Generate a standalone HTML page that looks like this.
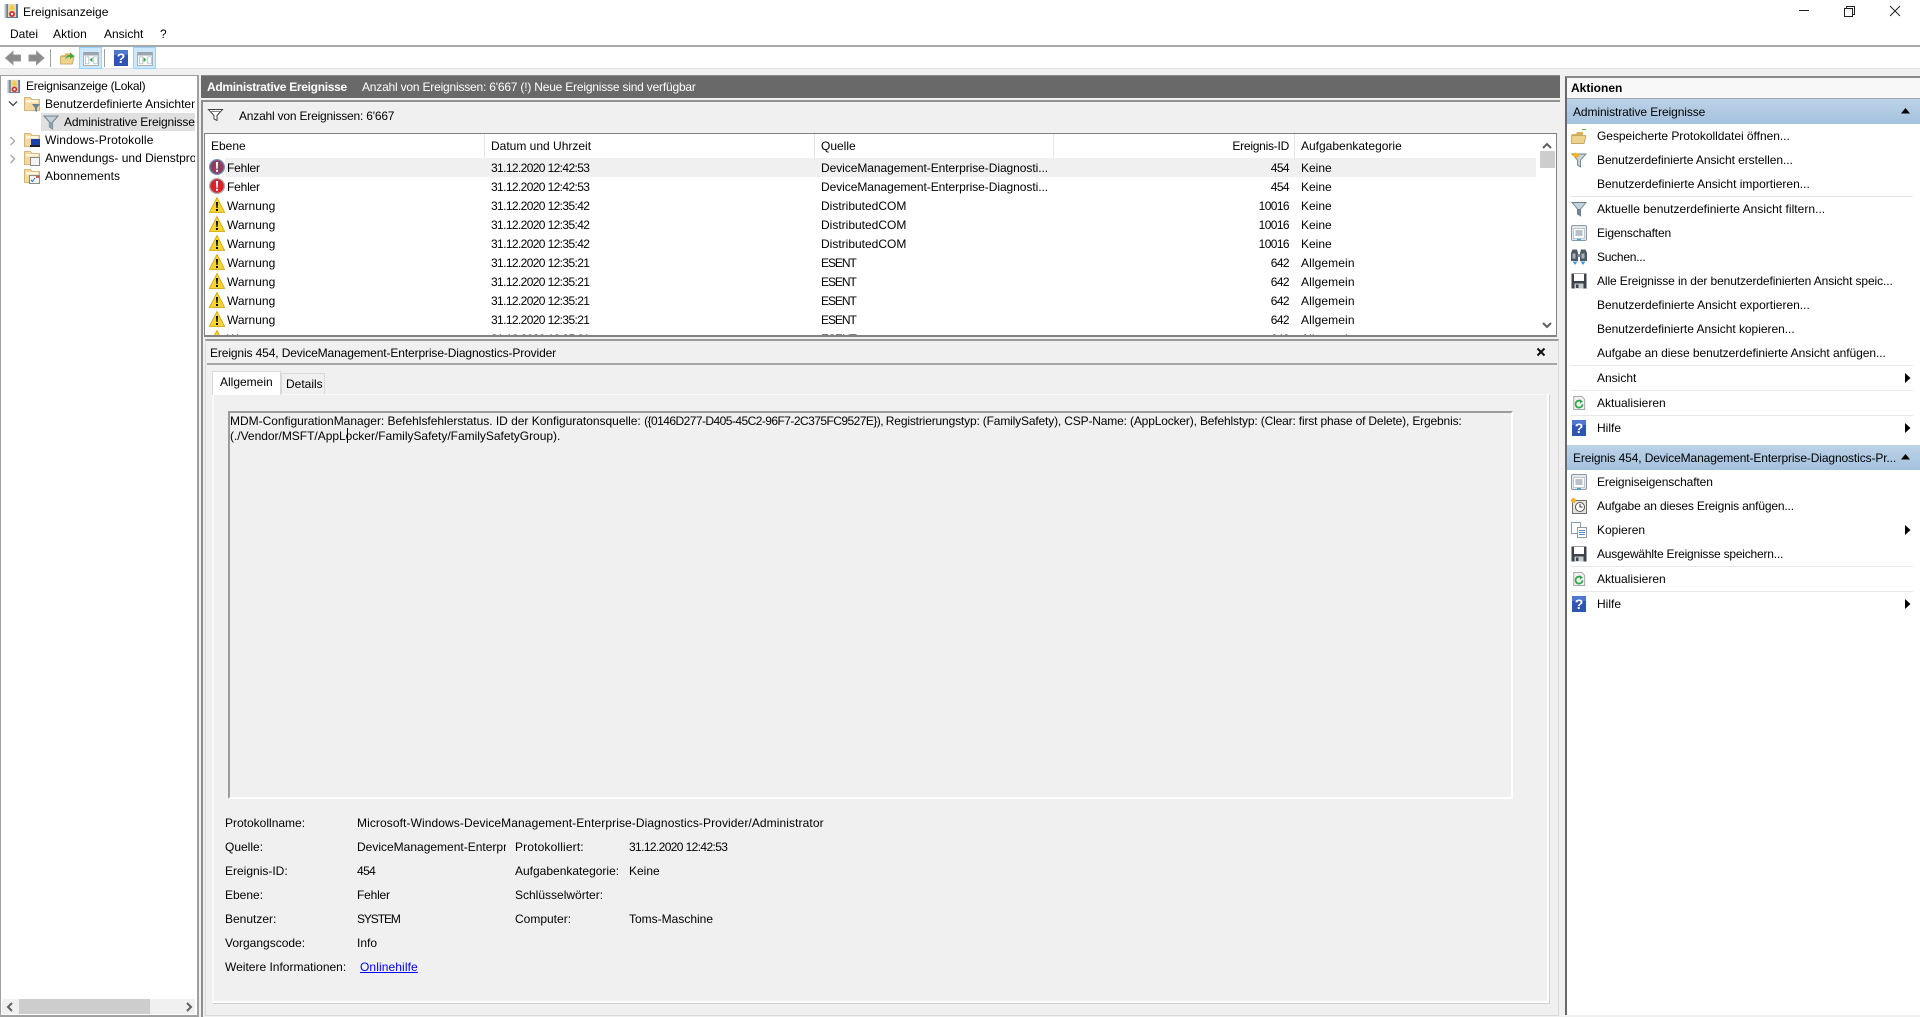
<!DOCTYPE html>
<html lang="de"><head><meta charset="utf-8"><title>Ereignisanzeige</title>
<style>
html,body{margin:0;padding:0;width:1920px;height:1017px;overflow:hidden;background:#f0f0f0}
body{position:relative;font:12px/16px "Liberation Sans",sans-serif;color:#000}
.a{position:absolute}
.t{position:absolute;white-space:nowrap;line-height:16px}
svg{position:absolute;overflow:visible}
.r{text-align:right}
.s{position:absolute;left:1571px;width:342px;height:1px;background:#e8e8e8}
.d{letter-spacing:-.62px}
.e{letter-spacing:-1.05px}
.n{letter-spacing:-.6px}
</style></head><body>
<svg width="0" height="0" style="position:absolute">
<defs>
<symbol id="err" viewBox="0 0 16 16"><circle cx="8" cy="8" r="8" fill="#a8a8a8"/><circle cx="8" cy="8" r="6.700" fill="#d8232a"/><path d="M6.900 3h2.200L8.700 9.800H7.300z" fill="#fff"/><rect x="7" y="10.800" width="2" height="2" fill="#fff"/></symbol>
<symbol id="err2" viewBox="0 0 16 16"><circle cx="8" cy="8" r="8" fill="#6f93c0"/><circle cx="8" cy="8" r="6.700" fill="#8e3f5e"/><path d="M6.900 3h2.200L8.700 9.800H7.300z" fill="#fff"/><rect x="7" y="10.800" width="2" height="2" fill="#fff"/></symbol>
<symbol id="warn" viewBox="0 0 16 16"><path d="M8 .5L15.700 15.500H.3z" fill="#f7d433" stroke="#c9a100" stroke-width=".8"/><path d="M7 5h2l-.4 6H7.400z" fill="#000"/><rect x="7" y="12" width="2" height="2" fill="#000"/></symbol>
<symbol id="fun" viewBox="0 0 16 16"><path d="M1 1.500h14L9.600 8v7L6.400 13V8z" fill="#c4d2dd" stroke="#6c7f8d" stroke-width=".9"/><path d="M6.400 8v5l3.200 2V8z" fill="#6e8494"/></symbol>
<symbol id="funo" viewBox="0 0 16 16"><path d="M1 2h14L9.600 8v7L6.400 13V8z" fill="#c9d3da" stroke="#6c7f8d" stroke-width=".9"/><path d="M1.500 2h7L6.400 6z" fill="#f59b12"/><circle cx="4.500" cy="3" r="2.400" fill="#ffb71a"/></symbol>
<symbol id="prop" viewBox="0 0 16 16"><rect x=".5" y=".5" width="15" height="15" rx="1.500" fill="#e5e8ec" stroke="#8b99a6"/><rect x="2.500" y="3.500" width="11" height="10" fill="#fff" stroke="#a9b4bf" stroke-width=".7"/><path d="M4.500 6h7M4.500 8h7M4.500 10h7" stroke="#6f7f8f"/><rect x="6" y="14" width="4" height="1.400" fill="#3aa3e0"/></symbol>
<symbol id="bino" viewBox="0 0 16 16"><path d="M0 4l1.500-3.500h4.500L7 4v8H0zM9 4l1-3.500h4.500L16 4v8H9z" fill="#4d5964"/><path d="M1.500 4.500h3v5h-3zM10.500 4.500h3v5h-3z" fill="#a9b3bd"/><rect x="6.500" y="5" width="3" height="3" fill="#7d8894"/><path d="M1.500 12.500h5L4 16zM9.500 12.500h5L12 16z" fill="#3c9ae0"/></symbol>
<symbol id="save" viewBox="0 0 16 16"><path d="M.5.5h15v15H.5z" fill="#3d434a"/><rect x="3" y="1" width="10" height="7" fill="#fff"/><rect x="3.500" y="10.500" width="9" height="5" fill="#c7ccd1"/><rect x="5" y="11.500" width="2.500" height="3.500" fill="#3d434a"/></symbol>
<symbol id="ref" viewBox="0 0 16 16"><path d="M2 .5h9l3.500 3.500v11.500H2z" fill="#f2f2f2" stroke="#a0a0a0"/><path d="M12 9.500A4 4 0 1 1 10.500 6.200" fill="none" stroke="#2fa84a" stroke-width="2"/><path d="M9 3.500l3.500 3-3.500 2z" fill="#2fa84a"/></symbol>
<symbol id="help" viewBox="0 0 14 16"><rect width="14" height="16" fill="#2f55b4"/><rect x="0" y="0" width="14" height="5" fill="#4f76d1"/><text x="7" y="13.200" text-anchor="middle" font-family="Liberation Sans" font-weight="bold" font-size="14" fill="#fff">?</text></symbol>
<symbol id="fol" viewBox="0 0 16 16"><path d="M1 5h4l1-2h6v3H1z" fill="#d9b256"/><path d="M.5 14.500V6.500h11l3.500.2-2 7.800z" fill="#ecd28a" stroke="#b2924a" stroke-width=".7"/></symbol>
<symbol id="fol2" viewBox="0 0 16 16"><path d="M.5 14.500V1.500h6l1.500 2h7.500v11z" fill="#f3d9a0" stroke="#c8a765" stroke-width=".8"/><rect x="2" y="4" width="12" height="2.500" fill="#fff6de"/></symbol>
<symbol id="evt" viewBox="0 0 16 16"><rect x="3" y="1" width="12" height="14" fill="#5b7ba4"/><rect x="1.500" y="1" width="2" height="14" fill="#b6bec6"/><rect x="5" y="1" width="8" height="13" fill="#e7d9a8"/><path d="M9 1.500l3 5H6z" fill="#f6cb2c"/><circle cx="9" cy="11" r="3" fill="#d02c2c"/><circle cx="9" cy="11" r="1.200" fill="#fff"/></symbol>
<symbol id="win" viewBox="0 0 22 20"><rect x=".5" y=".5" width="21" height="19" fill="#fff" stroke="#8c8c8c"/><rect x="1" y="1" width="20" height="4" fill="#9aa6b2"/><path d="M3 7h5v10H3zM15 7h5v10h-5z" fill="#fff" stroke="#8fa0ad" stroke-width=".8"/></symbol>
</defs></svg>

<!-- title -->
<div class="a" style="left:0;top:0;width:1920px;height:45px;background:#fff"></div>
<svg style="left:3px;top:3px" width="16" height="16"><use href="#evt"/></svg>
<div class="t" style="left:23px;top:4px">Ereignisanzeige</div>
<div class="t" style="left:10px;top:26px">Datei</div>
<div class="t" style="left:53px;top:26px;letter-spacing:.1px">Aktion</div>
<div class="t" style="left:104px;top:26px">Ansicht</div>
<div class="t" style="left:160px;top:26px">?</div>
<svg style="left:1799px;top:5px" width="110" height="16"><path d="M0 5.500h10" stroke="#222"/><path d="M45.500 3.500h8v8h-8zM47.500 3.500v-2h8v8h-2" fill="none" stroke="#222"/><path d="M91 1l10 10M101 1L91 11" stroke="#222"/></svg>

<!-- toolbar -->
<div class="a" style="left:0;top:45px;width:1920px;height:2px;background:#a9a9a9"></div>
<div class="a" style="left:0;top:47px;width:1920px;height:21px;background:#fff"></div>
<div class="a" style="left:0;top:68px;width:1920px;height:1px;background:#e2e2e2"></div>
<svg style="left:5px;top:50px" width="42" height="16"><path d="M.5 8L8 1.500V5h7.500v6H8v3.500z" fill="#8a8a8a" stroke="#9a9a9a"/><path d="M40 8l-7.500-6.500V5H25v6h7.500v3.500z" fill="#8a8a8a" stroke="#9a9a9a" transform="translate(-1)"/></svg>
<div class="a" style="left:50px;top:49px;width:1px;height:18px;background:#a0a0a0"></div>
<svg style="left:60px;top:50px" width="15" height="16"><use href="#fol"/><path d="M5 10c1-4 3-5 5-5V2.500L14.500 6 10 9V7C8 7 6 8 5 10z" fill="#3faa46"/></svg>
<div class="a" style="left:79px;top:47px;width:21px;height:20px;background:#cce8ff;border:1px solid #99d1ff"></div>
<svg style="left:83px;top:52px" width="16" height="14" viewBox="0 0 22 20"><use href="#win"/><path d="M13 7.500v7L9 11z" fill="#2fa84a"/></svg>
<div class="a" style="left:104px;top:49px;width:1px;height:18px;background:#a0a0a0"></div>
<svg style="left:114px;top:50px" width="14" height="16"><use href="#help"/></svg>
<div class="a" style="left:133px;top:47px;width:21px;height:20px;background:#cce8ff;border:1px solid #99d1ff"></div>
<svg style="left:137px;top:52px" width="16" height="14" viewBox="0 0 22 20"><use href="#win"/><path d="M9 7.500v7l4-3.500z" fill="#2fa84a"/></svg>

<!-- left tree -->
<div class="a" style="left:0;top:75px;width:196px;height:939px;background:#fff;border:1px solid #a0a0a0;border-right:2px solid #a0a0a0;border-bottom:2px solid #a0a0a0"></div>
<div class="a" style="left:41px;top:113px;width:154px;height:18px;background:#e0e0e0"></div>
<svg style="left:6px;top:79px" width="15" height="15" viewBox="0 0 16 16"><use href="#evt"/></svg>
<div class="t" style="left:26px;top:78px;letter-spacing:-.26px">Ereignisanzeige (Lokal)</div>
<svg style="left:8px;top:100px" width="10" height="8"><path d="M1 1.500l4 4 4-4" fill="none" stroke="#444" stroke-width="1.300"/></svg>
<svg style="left:24px;top:96px" width="16" height="16"><use href="#fol2"/><path d="M8 8h8l-3 4v4l-2-1v-3z" fill="#6e8494"/></svg>
<div class="a" style="left:45px;top:96px;width:150px;height:16px;overflow:hidden"><div class="t" style="left:0;top:0">Benutzerdefinierte Ansichten</div></div>
<svg style="left:43px;top:114px" width="16" height="16"><path d="M1 2h14L9.600 8v7L6.400 13V8z" fill="#c3cfd9" stroke="#6f8190"/><path d="M6.400 8v5l3.200 2V8z" fill="#8ea1af"/></svg>
<div class="a" style="left:64px;top:114px;width:131px;height:16px;overflow:hidden"><div class="t" style="left:0;top:0;letter-spacing:-.16px">Administrative Ereignisse</div></div>
<svg style="left:9px;top:136px" width="8" height="10"><path d="M1.500 1l4 4-4 4" fill="none" stroke="#a6a6a6" stroke-width="1.300"/></svg>
<svg style="left:24px;top:132px" width="16" height="16"><use href="#fol2"/><rect x="7" y="7" width="9" height="6" fill="#1c3fae"/><rect x="6" y="13" width="10" height="2" fill="#222"/></svg>
<div class="t" style="left:45px;top:132px;letter-spacing:.14px">Windows-Protokolle</div>
<svg style="left:9px;top:154px" width="8" height="10"><path d="M1.500 1l4 4-4 4" fill="none" stroke="#a6a6a6" stroke-width="1.300"/></svg>
<svg style="left:24px;top:150px" width="16" height="16"><use href="#fol2"/><rect x="6.500" y="7.500" width="9" height="8" fill="#f4f4f4" stroke="#8a8a8a"/></svg>
<div class="a" style="left:45px;top:150px;width:150px;height:16px;overflow:hidden"><div class="t" style="left:0;top:0">Anwendungs- und Dienstprotokolle</div></div>
<svg style="left:24px;top:168px" width="16" height="16"><use href="#fol2"/><rect x="5.500" y="7.500" width="10" height="8" fill="#f4f4f4" stroke="#8a8a8a"/><path d="M7 12l1.500 1.500L11 10" fill="none" stroke="#2a6fc0"/><rect x="12" y="8" width="3" height="2" fill="#e0534a"/></svg>
<div class="t" style="left:45px;top:168px;letter-spacing:.1px">Abonnements</div>
<!-- left scrollbar -->
<div class="a" style="left:2px;top:999px;width:193px;height:15px;background:#f0f0f0"></div>
<div class="a" style="left:19px;top:999px;width:131px;height:15px;background:#cdcdcd"></div>
<svg style="left:6px;top:1002px" width="187" height="10"><path d="M6 1L2 5l4 4" fill="none" stroke="#606060" stroke-width="2"/><path d="M181 1l4 4-4 4" fill="none" stroke="#606060" stroke-width="2"/></svg>

<!-- center header -->
<div class="a" style="left:201px;top:75px;width:1359px;height:23px;background:#696969;border-top:1px solid #8a8a8a;box-sizing:border-box"></div>
<div class="t" style="left:207px;top:79px;color:#fff;font-weight:bold;letter-spacing:-.3px">Administrative Ereignisse</div>
<div class="t" style="left:362px;top:79px;color:#fff;letter-spacing:-.2px">Anzahl von Ereignissen: 6'667 (!) Neue Ereignisse sind verfügbar</div>
<div class="a" style="left:201px;top:100px;width:1359px;height:2px;background:#8f8f8f"></div>
<div class="a" style="left:201px;top:100px;width:2px;height:240px;background:#8f8f8f"></div>
<svg style="left:208px;top:108px" width="15" height="13"><path d="M.5 1.500h14L9 7.500v5l-3-1.500V7.500z" fill="#fff" stroke="#444"/><path d="M2.500 3.500h10" stroke="#888"/></svg>
<div class="t" style="left:239px;top:108px;letter-spacing:-.2px">Anzahl von Ereignissen: 6'667</div>

<!-- list -->
<div class="a" style="left:204px;top:133px;width:1351px;height:201px;background:#fff;border:1px solid #828282;border-bottom:2px solid #828282;border-top:1px solid #828282;overflow:hidden" id="l">
<div class="a" style="left:279px;top:0;width:1px;height:24px;background:#e5e5e5"></div>
<div class="a" style="left:609px;top:0;width:1px;height:24px;background:#e5e5e5"></div>
<div class="a" style="left:848px;top:0;width:1px;height:24px;background:#e5e5e5"></div>
<div class="a" style="left:1089px;top:0;width:1px;height:24px;background:#e5e5e5"></div>
<div class="t" style="left:6px;top:4px">Ebene</div>
<div class="t" style="left:286px;top:4px">Datum und Uhrzeit</div>
<div class="t" style="left:616px;top:4px">Quelle</div>
<div class="t r" style="left:784px;width:300px;top:4px;letter-spacing:-.25px">Ereignis-ID</div>
<div class="t" style="left:1096px;top:4px">Aufgabenkategorie</div>
<div class="a" style="left:20px;top:24px;width:1311px;height:19px;background:#f0f0f0"></div>

<svg style="left:4px;top:25px" width="16" height="16"><use href="#err2"/></svg><div class="t" style="left:22px;top:26px;letter-spacing:-.2px">Fehler</div><div class="t d" style="left:286px;top:26px">31.12.2020 12:42:53</div><div class="t" style="left:616px;top:26px;letter-spacing:-.06px">DeviceManagement-Enterprise-Diagnosti...</div><div class="t r n" style="left:784px;width:300px;top:26px">454</div><div class="t" style="left:1096px;top:26px">Keine</div>
<svg style="left:4px;top:44px" width="16" height="16"><use href="#err"/></svg><div class="t" style="left:22px;top:45px;letter-spacing:-.2px">Fehler</div><div class="t d" style="left:286px;top:45px">31.12.2020 12:42:53</div><div class="t" style="left:616px;top:45px;letter-spacing:-.06px">DeviceManagement-Enterprise-Diagnosti...</div><div class="t r n" style="left:784px;width:300px;top:45px">454</div><div class="t" style="left:1096px;top:45px">Keine</div>
<svg style="left:4px;top:63px" width="16" height="16"><use href="#warn"/></svg><div class="t" style="left:22px;top:64px">Warnung</div><div class="t d" style="left:286px;top:64px">31.12.2020 12:35:42</div><div class="t" style="left:616px;top:64px">DistributedCOM</div><div class="t r n" style="left:784px;width:300px;top:64px">10016</div><div class="t" style="left:1096px;top:64px">Keine</div>
<svg style="left:4px;top:82px" width="16" height="16"><use href="#warn"/></svg><div class="t" style="left:22px;top:83px">Warnung</div><div class="t d" style="left:286px;top:83px">31.12.2020 12:35:42</div><div class="t" style="left:616px;top:83px">DistributedCOM</div><div class="t r n" style="left:784px;width:300px;top:83px">10016</div><div class="t" style="left:1096px;top:83px">Keine</div>
<svg style="left:4px;top:101px" width="16" height="16"><use href="#warn"/></svg><div class="t" style="left:22px;top:102px">Warnung</div><div class="t d" style="left:286px;top:102px">31.12.2020 12:35:42</div><div class="t" style="left:616px;top:102px">DistributedCOM</div><div class="t r n" style="left:784px;width:300px;top:102px">10016</div><div class="t" style="left:1096px;top:102px">Keine</div>
<svg style="left:4px;top:120px" width="16" height="16"><use href="#warn"/></svg><div class="t" style="left:22px;top:121px">Warnung</div><div class="t d" style="left:286px;top:121px">31.12.2020 12:35:21</div><div class="t e" style="left:616px;top:121px">ESENT</div><div class="t r n" style="left:784px;width:300px;top:121px">642</div><div class="t" style="left:1096px;top:121px;letter-spacing:.1px">Allgemein</div>
<svg style="left:4px;top:139px" width="16" height="16"><use href="#warn"/></svg><div class="t" style="left:22px;top:140px">Warnung</div><div class="t d" style="left:286px;top:140px">31.12.2020 12:35:21</div><div class="t e" style="left:616px;top:140px">ESENT</div><div class="t r n" style="left:784px;width:300px;top:140px">642</div><div class="t" style="left:1096px;top:140px;letter-spacing:.1px">Allgemein</div>
<svg style="left:4px;top:158px" width="16" height="16"><use href="#warn"/></svg><div class="t" style="left:22px;top:159px">Warnung</div><div class="t d" style="left:286px;top:159px">31.12.2020 12:35:21</div><div class="t e" style="left:616px;top:159px">ESENT</div><div class="t r n" style="left:784px;width:300px;top:159px">642</div><div class="t" style="left:1096px;top:159px;letter-spacing:.1px">Allgemein</div>
<svg style="left:4px;top:177px" width="16" height="16"><use href="#warn"/></svg><div class="t" style="left:22px;top:178px">Warnung</div><div class="t d" style="left:286px;top:178px">31.12.2020 12:35:21</div><div class="t e" style="left:616px;top:178px">ESENT</div><div class="t r n" style="left:784px;width:300px;top:178px">642</div><div class="t" style="left:1096px;top:178px;letter-spacing:.1px">Allgemein</div>
<svg style="left:4px;top:196px" width="16" height="16"><use href="#warn"/></svg><div class="t" style="left:22px;top:197px">Warnung</div><div class="t d" style="left:286px;top:197px">31.12.2020 12:35:21</div><div class="t e" style="left:616px;top:197px">ESENT</div><div class="t r n" style="left:784px;width:300px;top:197px">642</div><div class="t" style="left:1096px;top:197px;letter-spacing:.1px">Allgemein</div>

<div class="a" style="left:1331px;top:0;width:20px;height:201px;background:#fff"></div>
<div class="a" style="left:1335px;top:17px;width:15px;height:17px;background:#cdcdcd"></div>
<svg style="left:1335px;top:6px" width="16" height="190"><path d="M3 8l4-4 4 4" fill="none" stroke="#606060" stroke-width="2"/><path d="M3 183l4 4 4-4" fill="none" stroke="#606060" stroke-width="2"/></svg>
</div>

<!-- detail -->
<div class="a" style="left:201px;top:337px;width:2px;height:680px;background:#8f8f8f"></div>
<div class="a" style="left:205px;top:339px;width:1352px;height:674px;border:1px solid #dadada;border-top:2px solid #9a9a9a;box-sizing:content-box"></div>
<div class="t" style="left:210px;top:345px;letter-spacing:-.12px">Ereignis 454, DeviceManagement-Enterprise-Diagnostics-Provider</div>
<div class="a" style="left:207px;top:363px;width:1350px;height:2px;background:#a6a6a6"></div>
<svg style="left:1536px;top:347px" width="10" height="10"><path d="M1.500 1.500l7 7M8.500 1.500l-7 7" stroke="#111" stroke-width="2"/></svg>

<div class="a" style="left:212px;top:394px;width:1333px;height:606px;border:2px solid #fff;border-left:2px solid #f8f8f8;border-top:1px solid #f8f8f8;box-shadow:1px 1px 0 #d0d0d0"></div>
<div class="a" style="left:281px;top:373px;width:44px;height:21px;background:#f0f0f0;border:1px solid #d9d9d9;border-bottom:0;box-sizing:border-box"></div>
<div class="a" style="left:212px;top:371px;width:69px;height:24px;background:#fff;border:1px solid #d9d9d9;border-bottom:0;box-sizing:border-box"></div>
<div class="t" style="left:220px;top:374px">Allgemein</div>
<div class="t" style="left:286px;top:376px">Details</div>

<div class="a" style="left:228px;top:411px;width:1285px;height:388px;border-top:2px solid #9c9c9c;border-left:2px solid #9c9c9c;border-right:2px solid #fff;border-bottom:2px solid #fff;box-sizing:border-box"></div>
<div class="t" style="left:230px;top:413px"><span style="letter-spacing:-.02px">MDM-ConfigurationManager: Befehlsfehlerstatus. ID der Konfiguratonsquelle: </span><span style="letter-spacing:-.55px">({0146D277-D405-45C2-96F7-2C375FC9527E}), </span><span style="letter-spacing:-.16px">Registrierungstyp: (FamilySafety), CSP-Name: (AppLocker), Befehlstyp: (Clear: first phase of Delete), Ergebnis:</span></div>
<div class="t" style="left:230px;top:428px;letter-spacing:-.02px">(./Vendor/MSFT/AppLocker/FamilySafety/FamilySafetyGroup).</div>
<div class="a" style="left:347px;top:428px;width:1px;height:15px;background:#000"></div>

<div class="t" style="left:225px;top:815px">Protokollname:</div><div class="t" style="left:357px;top:815px;letter-spacing:.09px">Microsoft-Windows-DeviceManagement-Enterprise-Diagnostics-Provider/Administrator</div>
<div class="t" style="left:225px;top:839px">Quelle:</div><div class="a" style="left:357px;top:839px;width:149px;height:16px;overflow:hidden"><div class="t" style="left:0;top:0">DeviceManagement-Enterprise-Diagnostics-Provider</div></div><div class="t" style="left:515px;top:839px;letter-spacing:.15px">Protokolliert:</div><div class="t d" style="left:629px;top:839px">31.12.2020 12:42:53</div>
<div class="t" style="left:225px;top:863px">Ereignis-ID:</div><div class="t n" style="left:357px;top:863px">454</div><div class="t" style="left:515px;top:863px">Aufgabenkategorie:</div><div class="t" style="left:629px;top:863px">Keine</div>
<div class="t" style="left:225px;top:887px">Ebene:</div><div class="t" style="left:357px;top:887px;letter-spacing:-.2px">Fehler</div><div class="t" style="left:515px;top:887px">Schlüsselwörter:</div>
<div class="t" style="left:225px;top:911px">Benutzer:</div><div class="t" style="left:357px;top:911px;letter-spacing:-1.1px">SYSTEM</div><div class="t" style="left:515px;top:911px">Computer:</div><div class="t" style="left:629px;top:911px">Toms-Maschine</div>
<div class="t" style="left:225px;top:935px">Vorgangscode:</div><div class="t" style="left:357px;top:935px">Info</div>
<div class="t" style="left:225px;top:959px">Weitere Informationen:</div><div class="t" style="left:360px;top:959px;color:#0000ff;text-decoration:underline;letter-spacing:.1px">Onlinehilfe</div>

<!-- right panel -->
<div class="a" style="left:1565px;top:76px;width:355px;height:939px;background:#fff;border-left:2px solid #696969;border-top:2px solid #8a8a8a;box-sizing:border-box"></div>
<div class="a" style="left:1567px;top:78px;width:353px;height:20px;background:#f8f8f8;border-bottom:1px solid #a8a8a8"></div>
<div class="t" style="left:1571px;top:80px;font-weight:bold">Aktionen</div>
<div class="a" style="left:1567px;top:99px;width:353px;height:25px;background:linear-gradient(#bcd3e8,#a4c1de)"></div>
<div class="t" style="left:1573px;top:104px;letter-spacing:-.1px">Administrative Ereignisse</div>
<svg style="left:1901px;top:108px" width="10" height="6"><path d="M0 5.500L4.500 0 9 5.500z"/></svg>
<div class="a" style="left:1567px;top:445px;width:353px;height:25px;background:linear-gradient(#bcd3e8,#a4c1de)"></div>
<div class="t" style="left:1573px;top:450px;letter-spacing:-.12px">Ereignis 454, DeviceManagement-Enterprise-Diagnostics-Pr...</div>
<svg style="left:1901px;top:454px" width="10" height="6"><path d="M0 5.500L4.500 0 9 5.500z"/></svg>

<svg style="left:1571px;top:129px" width="16" height="16"><use href="#fol"/><rect x="11" y="0" width="4" height="1" fill="#3fc04a"/></svg><div class="t" style="left:1597px;top:128px;letter-spacing:-.03px">Gespeicherte Protokolldatei öffnen...</div>
<svg style="left:1571px;top:152px" width="16" height="16"><use href="#funo"/></svg><div class="t" style="left:1597px;top:152px;letter-spacing:-.06px">Benutzerdefinierte Ansicht erstellen...</div>
<div class="t" style="left:1597px;top:176px">Benutzerdefinierte Ansicht importieren...</div>
<div class="s" style="top:196px"></div>
<svg style="left:1571px;top:201px" width="16" height="16"><use href="#fun"/></svg><div class="t" style="left:1597px;top:201px;letter-spacing:.03px">Aktuelle benutzerdefinierte Ansicht filtern...</div>
<svg style="left:1571px;top:225px" width="16" height="16"><use href="#prop"/></svg><div class="t" style="left:1597px;top:225px;letter-spacing:-.16px">Eigenschaften</div>
<svg style="left:1571px;top:249px" width="16" height="16"><use href="#bino"/></svg><div class="t" style="left:1597px;top:249px;letter-spacing:-.25px">Suchen...</div>
<svg style="left:1571px;top:273px" width="16" height="16"><use href="#save"/></svg><div class="t" style="left:1597px;top:273px;letter-spacing:-.11px">Alle Ereignisse in der benutzerdefinierten Ansicht speic...</div>
<div class="t" style="left:1597px;top:297px">Benutzerdefinierte Ansicht exportieren...</div>
<div class="t" style="left:1597px;top:321px;letter-spacing:-.03px">Benutzerdefinierte Ansicht kopieren...</div>
<div class="t" style="left:1597px;top:345px;letter-spacing:-.05px">Aufgabe an diese benutzerdefinierte Ansicht anfügen...</div>
<div class="s" style="top:365px"></div>
<div class="t" style="left:1597px;top:370px">Ansicht</div>
<svg style="left:1905px;top:373px" width="6" height="10"><path d="M0 0l5.500 5L0 10z"/></svg>
<div class="s" style="top:390px"></div>
<svg style="left:1572px;top:395px" width="14" height="16" viewBox="0 0 16 16"><use href="#ref"/></svg><div class="t" style="left:1597px;top:395px">Aktualisieren</div>
<div class="s" style="top:415px"></div>
<svg style="left:1572px;top:420px" width="14" height="16"><use href="#help"/></svg><div class="t" style="left:1597px;top:420px">Hilfe</div>
<svg style="left:1905px;top:423px" width="6" height="10"><path d="M0 0l5.500 5L0 10z"/></svg>

<svg style="left:1571px;top:474px" width="16" height="16"><use href="#prop"/></svg><div class="t" style="left:1597px;top:474px;letter-spacing:-.11px">Ereigniseigenschaften</div>
<svg style="left:1571px;top:498px" width="16" height="16"><rect x="1.500" y="2.500" width="14" height="13" fill="#e8e4d8" stroke="#6e6e6e"/><circle cx="9" cy="9" r="4.500" fill="#fff" stroke="#555"/><path d="M9 6v3h2.500" fill="none" stroke="#333"/><circle cx="2.500" cy="2.500" r="2.500" fill="#f7b21c"/></svg><div class="t" style="left:1597px;top:498px;letter-spacing:-.16px">Aufgabe an dieses Ereignis anfügen...</div>
<svg style="left:1571px;top:522px" width="16" height="16"><rect x=".5" y=".5" width="9" height="11" fill="#fff" stroke="#8a9bab"/><rect x="6.500" y="5.500" width="9" height="10" fill="#fff" stroke="#8a9bab"/><path d="M8 8.500h6M8 10.500h6M8 12.500h6" stroke="#4d8bc6"/></svg><div class="t" style="left:1597px;top:522px">Kopieren</div>
<svg style="left:1905px;top:525px" width="6" height="10"><path d="M0 0l5.500 5L0 10z"/></svg>
<svg style="left:1571px;top:546px" width="16" height="16"><use href="#save"/></svg><div class="t" style="left:1597px;top:546px;letter-spacing:-.21px">Ausgewählte Ereignisse speichern...</div>
<div class="s" style="top:566px"></div>
<svg style="left:1572px;top:571px" width="14" height="16" viewBox="0 0 16 16"><use href="#ref"/></svg><div class="t" style="left:1597px;top:571px">Aktualisieren</div>
<div class="s" style="top:591px"></div>
<svg style="left:1572px;top:596px" width="14" height="16"><use href="#help"/></svg><div class="t" style="left:1597px;top:596px">Hilfe</div>
<svg style="left:1905px;top:599px" width="6" height="10"><path d="M0 0l5.500 5L0 10z"/></svg>
</body></html>
